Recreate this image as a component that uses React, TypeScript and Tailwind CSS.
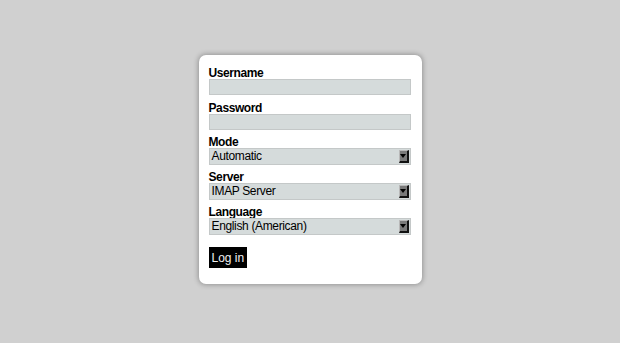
import React from "react";

function Arrow() {
  return (
    <div className="absolute right-[1px] top-[1px] bottom-[1px] w-[10px] bg-[#7a7a7a] border-t border-l border-t-[#b8b8b8] border-l-[#b8b8b8] border-r-2 border-b-2 border-r-[#111] border-b-[#111] flex items-center justify-center">
      <svg width="6" height="4" viewBox="0 0 6 4">
        <polygon points="0,0 6,0 3,4" fill="#000" />
      </svg>
    </div>
  );
}

function Select({ value }: { value: string }) {
  return (
    <div className="relative h-[17px] w-[202px] bg-[#d5dbdb] border border-[#c4c8c8] text-[12px] tracking-[-0.35px] leading-[15px] pl-[2px] text-black">
      {value}
      <Arrow />
    </div>
  );
}

function Label({ children, mt }: { children: React.ReactNode; mt: string }) {
  return (
    <div className={`text-[12px] tracking-[-0.4px] leading-[12px] h-[12px] font-bold text-black ${mt}`}>
      {children}
    </div>
  );
}

export default function App() {
  return (
    <div
      className="min-h-[343px] w-full bg-[#d0d0d0] flex items-center justify-center pb-[5px]"
      style={{ fontFamily: '"Liberation Sans", Arial, sans-serif' }}
    >
      <div className="w-[223px] bg-white rounded-[7px] shadow-[0_0_5px_1px_rgba(0,0,0,0.28)] pt-[12px] pb-[15px] pl-[10px] pr-[11px] flex flex-col">
        <Label mt="mt-0">Username</Label>
        <div className="h-[16px] w-[202px] bg-[#d5dbdb] border border-[#c4c8c8]" />
        <Label mt="mt-[7px]">Password</Label>
        <div className="h-[16px] w-[202px] bg-[#d5dbdb] border border-[#c4c8c8]" />
        <Label mt="mt-[6px]">Mode</Label>
        <Select value="Automatic" />
        <Label mt="mt-[6px]">Server</Label>
        <Select value="IMAP Server" />
        <Label mt="mt-[6px]">Language</Label>
        <Select value="English (American)" />
        <div className="mt-[10px]">
          <div className="inline-flex items-center h-[21px] px-[3px] bg-black text-[#f0f0f0] text-[12px]">
            Log in
          </div>
        </div>
      </div>
    </div>
  );
}
